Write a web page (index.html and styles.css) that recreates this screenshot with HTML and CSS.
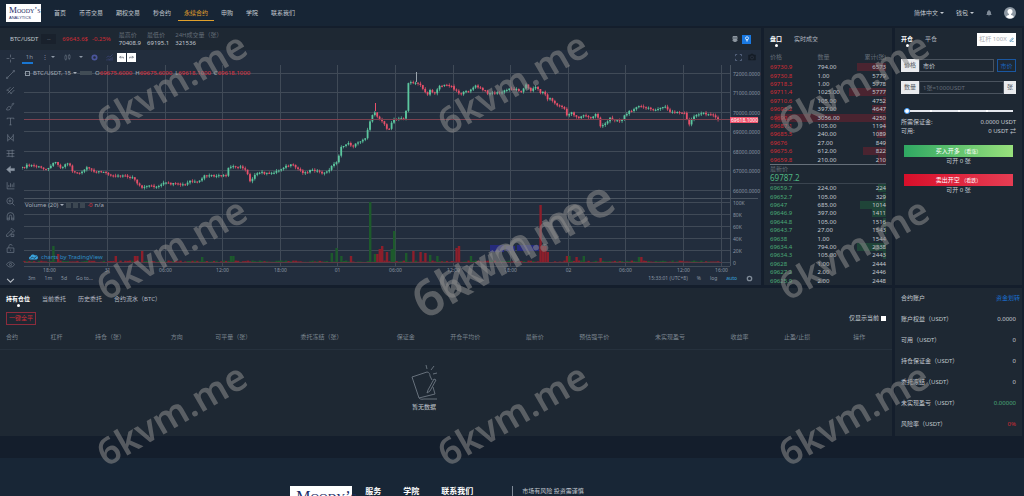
FILE: index.html
```html
<!DOCTYPE html>
<html lang="zh-CN">
<head>
  <meta charset="UTF-8">
  <meta name="viewport" content="width=device-width, initial-scale=1.0">
  <title>永续合约</title>
  <link rel="stylesheet" href="styles.css">
</head>
<body>
  <header class="header">
    <a class="logo" href="#"><span class="logo-name">M<small>OODY</small>’<small>S</small></span><span class="logo-sub">ANALYTICS</span></a>
    <nav class="nav">
      <a href="#">首页</a>
      <a href="#">币币交易</a>
      <a href="#">期权交易</a>
      <a href="#">秒合约</a>
      <a href="#" class="active">永续合约</a>
      <a href="#">申购</a>
      <a href="#">学院</a>
      <a href="#">联系我们</a>
    </nav>
    <div class="user-menu">
      <a href="#">简体中文<i class="caret"></i></a>
      <a href="#">钱包<i class="caret"></i></a>
      <svg class="bell" viewBox="0 0 12 14"><path d="M6 1c1 0 1.400 .6 1.400 1.300C9.500 3 10 5 10 7c0 2 .6 2.800 1.500 3.800H.5C1.400 9.800 2 9 2 7c0-2 .5-4 2.600-4.700C4.600 1.600 5 1 6 1zM4.500 12h3c0 2-3 2-3 0z"/></svg>
      <svg class="avatar" viewBox="0 0 24 24"><circle cx="12" cy="12" r="12" fill="#8d98a3"/><circle cx="12" cy="9" r="5" fill="#fff"/><path d="M10 12h4v4c3 .6 5.500 1.500 5.500 4.200A12 12 0 0 1 4.500 20.200C4.500 17.500 7 16.600 10 16z" fill="#fff"/></svg>
    </div>
  </header>

  <main class="main">
    <section class="panel market">
      <div class="ticker">
        <span class="pair">BTC/USDT</span>
        <button type="button" class="pair-select">--</button>
        <span class="last red">69643.6$</span>
        <span class="change red">-0.25%</span>
        <dl>
          <div><dt>最高价</dt><dd>70408.9</dd></div>
          <div><dt>最低价</dt><dd>69195.1</dd></div>
          <div><dt>24H成交量（张）</dt><dd>321536</dd></div>
        </dl>
        <div class="ticker-tools">
          <svg viewBox="0 0 12 12"><path d="M2 1h8v6H2zM2 4h8M6 1v8M1 9h10M3 11h6" fill="none" stroke="#aab2bb" stroke-width="1.500"/></svg>
          <button type="button" class="theme" aria-label="主题"><svg viewBox="0 0 12 12"><circle cx="6" cy="4.500" r="3" fill="none" stroke="#fff" stroke-width="1.500"/><path d="M6 7v4" stroke="#fff" stroke-width="2"/></svg></button>
        </div>
      </div>
      <div class="chart">
        <div class="draw-tools">
          <svg viewBox="0 0 16 16"><path d="M8 1v5M8 10v5M1 8h5M10 8h5"/></svg>
          <svg viewBox="0 0 16 16"><path d="M3 13L13 3"/><circle cx="2" cy="14" r="1.500"/><circle cx="14" cy="2" r="1.500"/></svg>
          <svg viewBox="0 0 16 16"><path d="M1 9l7-7M3 13L14 2M8 14l7-7M2 6l8 8"/></svg>
          <svg viewBox="0 0 16 16"><path d="M1 14c1-5 4-7 7-5 2 3-2 6-7 5zM8 9l6-6M10 4l4-2"/></svg>
          <svg viewBox="0 0 16 16"><path d="M2 4V2h12v2M8 2v12M6 14h4"/></svg>
          <svg viewBox="0 0 16 16"><path d="M3 13V4l5 6 5-6v9M3 13l5-3 5 3M2 3h2M12 3h2M2 14h2M12 14h2"/></svg>
          <svg viewBox="0 0 16 16"><path d="M1 3h14M1 8h14M1 13h14M5 3v10M11 1v14"/></svg>
          <svg viewBox="0 0 16 16" class="solid"><path d="M1 8l7-6v4h7v4H8v4z"/></svg>
          <svg viewBox="0 0 16 16"><path d="M2 2v12h13M5 11V7M8 11V4M11 11V6M14 11V3"/></svg>
          <svg viewBox="0 0 16 16"><circle cx="7" cy="7" r="5.500"/><path d="M11 11l4 4M4.500 7h5M7 4.500v5"/></svg>
          <svg viewBox="0 0 16 16"><path d="M2 14V7a6 6 0 0 1 12 0v7h-4V7.500a2 2 0 0 0-4 0V14zM2 11h4M10 11h4"/></svg>
          <svg viewBox="0 0 16 16"><path d="M1 12l8-8 3 3-8 8H1zM8 2l3-1 4 4-2 3M9 11h5v4H9z"/></svg>
          <svg viewBox="0 0 16 16"><path d="M2 7h12v8H2zM5 7V4c0-4 6-4 6-1M8 10v2"/></svg>
          <svg viewBox="0 0 16 16"><path d="M1 8c3-6 11-6 14 0-3 6-11 6-14 0z"/><circle cx="8" cy="8" r="2"/></svg>
          <svg viewBox="0 0 16 16" class="bright"><path d="M2 5l6 6 6-6"/></svg>
        </div>
        <div class="chart-body">
          <div class="chart-toolbar">
            <span class="interval">1h</span>
            <span class="dots">⋮</span><i class="caret"></i>
            <svg class="kline" viewBox="0 0 16 16"><path d="M2 4h4v8H2zM4 1v3M4 12v3M10 3h4v7h-4zM12 0v3M12 10v4"/></svg><i class="caret"></i>
            <svg class="gear" viewBox="0 0 16 16"><circle cx="8" cy="8" r="5" stroke-width="4"/></svg>
            <svg class="indicator" viewBox="0 0 16 16"><path d="M1 8l4-3 4 2 6-6M2 15v-3M5 15v-5M8 15v-4M11 15V9M14 15V7"/></svg>
            <div class="history">
              <button type="button" aria-label="撤销"><svg viewBox="0 0 16 16"><path d="M6 3L2 7l4 4M2 7h12v4"/></svg></button>
              <button type="button" aria-label="重做"><svg viewBox="0 0 16 16"><path d="M10 3l4 4-4 4M14 7H2v4"/></svg></button>
            </div>
            <svg class="fullscreen" viewBox="0 0 16 16"><path d="M1 5V1h4M11 1h4v4M15 11v4h-4M5 15H1v-4"/></svg>
            <svg class="camera" viewBox="0 0 16 16"><path d="M1 4h4l1-2h4l1 2h4v10H1z"/><circle cx="8" cy="9" r="3"/></svg>
          </div>
          <div class="plot">
            <svg id="kline" viewBox="22 64 739 210"></svg>
            <div class="legend">
              <i class="box"></i><span class="symbol">BTC/USDT, 15</span><i class="caret"></i><i class="chip"></i>
              <span>O<b>69675.6000</b></span><span>H<b>69675.6000</b></span><span>L<b>69618.1000</b></span><span>C<b>69618.1000</b></span>
            </div>
            <div class="legend volume">
              <span>Volume (20)</span><i class="caret"></i><i class="square"></i><i class="square"></i><i class="square"></i><b>·0</b><span>n/a</span>
            </div>
            <a class="tv" href="#"><svg viewBox="0 0 18 12"><path d="M3 11a3 3 0 0 1 0-6 5 5 0 0 1 9-2 4 4 0 0 1 3 8z" fill="#3aa5df"/><path d="M3 9l4-3 3 3 5-4" stroke="#222d3d" stroke-width="1.500" fill="none"/></svg>charts by TradingView</a>
          </div>
          <div class="chart-footer">
            <button type="button">3m</button>
            <button type="button">1m</button>
            <button type="button">5d</button>
            <button type="button">Go to...</button>
            <span class="clock">15:33:01 (UTC+8)</span>
            <button type="button">%</button>
            <button type="button">log</button>
            <button type="button" class="auto">auto</button>
            <svg viewBox="0 0 16 16"><circle cx="8" cy="8" r="5"/></svg>
          </div>
        </div>
      </div>
    </section>

    <section class="panel book">
      <div class="tabs">
        <a href="#" class="active">盘口</a>
        <a href="#">实时成交</a>
      </div>
      <table class="depth">
        <thead><tr><th>价格</th><th>数量</th><th>累计(张)</th></tr></thead>
      </table>
      <table class="depth rows asks"><tbody id="asks"></tbody></table>
      <div class="latest"><span>最新价</span><strong>69787.2</strong></div>
      <table class="depth rows bids"><tbody id="bids"></tbody></table>
    </section>

    <section class="panel trade">
      <div class="tabs">
        <a href="#" class="active">开仓</a>
        <a href="#">平仓</a>
        <button type="button" class="lever">杠杆 100X <svg viewBox="0 0 16 16"><path d="M3 12l8-9 3 2-8 9H3zM8 15h7"/></svg></button>
      </div>
      <form class="trade-form">
        <div class="field">
          <label for="price">价格</label>
          <input type="text" id="price" value="市价">
          <button type="button" class="market-btn">市价</button>
        </div>
        <div class="field">
          <label for="amount">数量</label>
          <input type="text" id="amount" placeholder="1张=1000USDT">
          <span class="unit">张</span>
        </div>
        <input type="range" class="slider" aria-label="仓位比例" min="0" max="100" value="0">
        <div class="info"><span>所需保证金:</span><span>0.0000 USDT</span></div>
        <div class="info"><span>可用:</span><span>0 USDT ⇄</span></div>
        <button type="button" class="buy">买入开多 <small>（看涨）</small></button>
        <p>可开 0 张</p>
        <button type="button" class="sell">卖出开空 <small>（看跌）</small></button>
        <p>可开 0 张</p>
      </form>
    </section>

    <section class="panel positions">
      <div class="tabs">
        <a href="#" class="active">持有仓位</a>
        <a href="#">当前委托</a>
        <a href="#">历史委托</a>
        <a href="#">合约流水（BTC）</a>
      </div>
      <div class="actions">
        <button type="button" class="close-all">一键全平</button>
        <label for="only-current">仅显示当前 <input type="checkbox" id="only-current"></label>
      </div>
      <table class="position-table">
        <thead>
          <tr>
            <th>合约</th><th>杠杆</th><th>持仓（张）</th><th>方向</th><th>可平量（张）</th><th>委托冻结（张）</th><th>保证金</th>
            <th>开仓平均价</th><th>最新价</th><th>预估强平价</th><th>未实现盈亏</th><th>收益率</th><th>止盈/止损</th><th>操作</th>
          </tr>
        </thead>
      </table>
      <div class="empty">
        <svg viewBox="0 0 28 36"><path d="M2 12l15-5c2 0 3 2 3 4l2 4M2 12l7 21 16-4-2-7M9 33c2 2 4 1 5 1h13"/><path d="M18 25l6-11 2 1-6 11-3 2z"/><path d="M17 4l-1-4M21 5l3-4M23 9l4-1"/></svg>
        <span>暂无数据</span>
      </div>
    </section>

    <section class="panel account">
      <h2>合约账户 <a href="#">资金划转</a></h2>
      <dl>
        <div><dt>账户权益（USDT）</dt><dd>0.0000</dd></div>
        <div><dt>可用（USDT）</dt><dd>0</dd></div>
        <div><dt>持仓保证金（USDT）</dt><dd>0</dd></div>
        <div><dt>委托冻结（USDT）</dt><dd>0</dd></div>
        <div><dt>未实现盈亏（USDT）</dt><dd class="green">0.00000</dd></div>
        <div><dt>风险率（USDT）</dt><dd class="red">0%</dd></div>
      </dl>
    </section>
  </main>

  <footer class="footer">
    <a class="logo logo-big" href="#"><span class="logo-name">M<small>OODY</small>’<small>S</small></span><span class="logo-sub">ANALYTICS</span></a>
    <h3>服务</h3>
    <h3>学院</h3>
    <h3>联系我们</h3>
    <p>市场有风险 投资需谨慎</p>
  </footer>

  <div class="watermark">
    <span>6kvm.me</span><span>6kvm.me</span><span>6kvm.me</span>
    <span>6kvm.me</span><span>6kvm.me</span><span>6kvm.me</span>
    <span>6kvm.me</span><span>6kvm.me</span><span>6kvm.me</span>
  </div>
  <div class="watermark watermark-big"><span>6kvm.me</span></div>

  <script src="script.js"></script>
</body>
</html>
```
FILE: styles.css
```css
* {
  box-sizing: border-box;
}
body {
  margin: 0;
  height: 100vh;
  overflow: hidden;
  background-color: #141e2c;
  color: #c3c9d0;
  font-family: "Noto Sans", "Noto Sans CJK SC", sans-serif;
  font-size: 6px;
  line-height: 8px;
}
a {
  color: inherit;
  text-decoration: none;
}
button, input {
  font: inherit;
  color: inherit;
  margin: 0;
  padding: 0;
  border: none;
  background: none;
}
button {
  cursor: pointer;
}
dl, dd, p, h2, h3 {
  margin: 0;
}
svg {
  display: block;
  fill: none;
  stroke: #7f8a97;
}
.red {
  color: #d22c35;
}
.green {
  color: #4aa877;
}
.caret {
  display: inline-block;
  border: 2px solid transparent;
  border-top-color: currentColor;
  border-bottom: none;
  vertical-align: middle;
}

/* header */
.header {
  display: flex;
  align-items: center;
  height: 26px;
  padding: 0 8px 0 6px;
  background-color: #172535;
}
.logo {
  display: flex;
  flex-direction: column;
  justify-content: center;
  width: 35px;
  height: 18px;
  padding-left: 3px;
  background-color: #fff;
  color: #1c2c66;
}
.logo-name {
  font: 9px/8px "Liberation Serif", serif;
  white-space: nowrap;
}
.logo-name small {
  font-size: 6px;
}
.logo-sub {
  font: 4px/5px "Liberation Sans", sans-serif;
}
.nav {
  display: flex;
  gap: 1px;
  margin-left: 7px;
}
.nav a {
  padding: 4px 6px 3px;
  border-bottom: 1px solid transparent;
}
.nav .active {
  color: #e0a02c;
  border-color: #e0a02c;
}
.user-menu {
  display: flex;
  align-items: center;
  gap: 12px;
  margin-left: auto;
}
.user-menu .caret {
  margin-left: 2px;
}
.bell {
  width: 6px;
  height: 8px;
  fill: #7f8a97;
  stroke: none;
}
.avatar {
  width: 12px;
  height: 12px;
  stroke: none;
}

/* layout */
.main {
  display: grid;
  grid-template-columns: minmax(0, 1fr) 128px 127px;
  gap: 3px;
  padding: 2px 2px 0 0;
}
.panel {
  background-color: #1e2833;
}
.positions {
  grid-column: 1 / 3;
}
.tabs {
  display: flex;
  align-items: center;
  gap: 12px;
  height: 22px;
  color: #b4bac2;
}
.tabs .active {
  position: relative;
  color: #fff;
  font-weight: bold;
}
.tabs .active::after {
  content: "";
  position: absolute;
  left: 50%;
  top: 9px;
  width: 3px;
  height: 3px;
  margin-left: -1px;
  border-radius: 50%;
  background-color: #fff;
}

/* ticker */
.ticker {
  display: flex;
  align-items: center;
  height: 22px;
  padding: 0 10px;
}
.pair-select {
  width: 15px;
  height: 10px;
  margin: 0 6px 0 3px;
  background-color: #19212c;
  color: #687280;
}
.change {
  margin-left: 4px;
}
.ticker dl {
  display: flex;
  gap: 6px;
  margin-left: 8px;
}
.ticker dt {
  color: #646d78;
}
.ticker-tools {
  display: flex;
  align-items: center;
  gap: 4px;
  margin-left: auto;
}
.ticker-tools svg {
  width: 6px;
  height: 6px;
}
.theme {
  display: grid;
  place-items: center;
  width: 9px;
  height: 9px;
  background-color: #1978e0;
}

/* chart */
.chart {
  display: grid;
  grid-template-columns: 22px minmax(0, 1fr);
  background-color: #222d3d;
  color: #8b96a3;
}
.draw-tools {
  display: flex;
  flex-direction: column;
  align-items: center;
  justify-content: space-between;
  padding: 4px 1px 0 0;
}
.draw-tools svg {
  width: 9px;
  height: 9px;
}
.draw-tools .solid {
  fill: #8b96a3;
}
.draw-tools .bright {
  stroke: #b4bac2;
  stroke-width: 2;
}
.chart-toolbar {
  display: flex;
  align-items: center;
  height: 14px;
  padding-right: 5px;
}
.chart-toolbar svg {
  width: 7px;
  height: 7px;
}
.interval {
  width: 11px;
  height: 14px;
  padding-top: 3px;
  border-bottom: 2px solid #1976d2;
  text-align: right;
}
.dots {
  margin: 0 3px 0 9px;
}
.chart-toolbar .kline {
  margin: 0 8px 0 9px;
}
.chart-toolbar .gear {
  margin: 0 8px 0 8px;
  stroke: #4b559c;
}
.chart-toolbar .indicator {
  stroke: #4b559c;
}
.history {
  display: flex;
  gap: 1px;
  margin-left: 4px;
}
.history button {
  display: grid;
  place-items: center;
  width: 9px;
  height: 9px;
  background-color: #fff;
}
.history svg {
  width: 5px;
  height: 5px;
  stroke: #4b5563;
  stroke-width: 2;
}
.chart-toolbar .fullscreen {
  margin: 0 6px 0 auto;
  stroke: #5d6a86;
  stroke-width: 2;
}
.chart-toolbar .camera {
  width: 8px;
  height: 8px;
  fill: #151c27;
  stroke: #151c27;
}
.camera circle {
  stroke: #39424f;
}
.plot {
  position: relative;
}
.plot > svg {
  width: 100%;
  stroke: none;
}
.axis-text {
  font-size: 5px;
  fill: #8b96a3;
}
.tag-text {
  font-size: 5px;
  fill: #fff;
}
.legend {
  position: absolute;
  top: 5px;
  left: 3px;
  display: flex;
  align-items: center;
  gap: 3px;
  color: #a5aeb9;
}
.legend b {
  font-weight: normal;
  color: #e0323f;
}
.legend .caret {
  margin-left: -1px;
}
.box {
  width: 5px;
  height: 5px;
  border: 1px solid #8b96a3;
}
.chip {
  width: 12px;
  height: 4px;
  background-color: #414c55;
}
.legend.volume {
  top: 137px;
  gap: 2px;
}
.volume .caret {
  margin-left: 0;
}
.volume .square {
  width: 5px;
  height: 6px;
  background-color: #3c4752;
}
.tv {
  position: absolute;
  left: 7px;
  top: 189px;
  display: flex;
  align-items: center;
  gap: 3px;
  color: #2f8fc4;
}
.tv svg {
  width: 9px;
  height: 6px;
  stroke: none;
}
.chart-footer {
  display: flex;
  align-items: center;
  gap: 9px;
  height: 11px;
  padding: 0 8px 3px 6px;
  font-size: 5px;
}
.clock {
  margin-left: auto;
}
.auto {
  color: #3aa5df;
}
.chart-footer svg {
  width: 7px;
  height: 7px;
  stroke-width: 3;
}

/* order book */
.book {
  padding: 0 6px;
}
.depth {
  width: 100%;
  table-layout: fixed;
  border-collapse: collapse;
}
.depth th, .depth td {
  padding: 0;
  text-align: left;
  font-weight: normal;
  line-height: 8px;
  width: 41%;
}
.depth th {
  height: 13px;
  color: #646d78;
}
.depth th:last-child, .depth td:last-child {
  width: auto;
  text-align: right;
}
.depth th:nth-child(2), .depth td:nth-child(2) {
  width: 28%;
}
.rows {
  height: 101px;
}
.rows tr {
  background: linear-gradient(var(--bar), var(--bar)) right / var(--depth) 100% no-repeat;
}
.asks {
  --bar: #4a2430;
}
.bids {
  --bar: #1f4438;
}
.asks td:first-child {
  color: #d22c35;
}
.bids td:first-child {
  color: #4aa877;
}
.latest {
  display: flex;
  flex-direction: column;
  height: 20px;
  border-top: 1px solid #67707a;
  border-bottom: 1px solid #3a444f;
  color: #646d78;
}
.latest strong {
  color: #4fb582;
  font-size: 8px;
  font-weight: normal;
  line-height: 9px;
}

/* trade form */
.trade {
  padding: 0 6px;
}
.lever {
  display: flex;
  align-items: center;
  justify-content: center;
  gap: 2px;
  width: 39px;
  height: 13px;
  margin-left: auto;
  background-color: #fff;
  color: #a6a9b0;
}
.lever svg {
  width: 5px;
  height: 5px;
  stroke: #2879a8;
  stroke-width: 2;
}
.trade-form {
  display: flex;
  flex-direction: column;
  padding-top: 9px;
}
.field {
  display: flex;
  height: 13px;
  margin-bottom: 9px;
}
.field label, .unit {
  width: 18px;
  background-color: #e9ebee;
  color: #505862;
  text-align: center;
  line-height: 13px;
}
.unit {
  width: 12px;
}
.field input {
  flex: 1;
  min-width: 0;
  padding: 0 3px;
  border: 1px solid #4a535e;
}
.field input::placeholder {
  color: #646d78;
}
.market-btn {
  width: 19px;
  margin-left: 3px;
  border: 1px solid #1a57a0;
  color: #1a64c0;
}
.slider {
  appearance: none;
  height: 6px;
  margin: 5px 3px 4px 3px;
}
.slider::-webkit-slider-runnable-track {
  height: 2px;
  background: repeating-linear-gradient(90deg, #e4e7ed 0 26px, #fff 26px 28px);
}
.slider::-webkit-slider-thumb {
  appearance: none;
  width: 6px;
  height: 6px;
  margin-top: -2px;
  border: 1px solid #409eff;
  border-radius: 50%;
  background-color: #fff;
}
.info {
  display: flex;
  justify-content: space-between;
  line-height: 9px;
}
.buy, .sell {
  height: 12px;
  margin: 9px 3px 0;
  color: #fff;
}
.buy {
  background: linear-gradient(90deg, #2fa862, #98e07c);
}
.sell {
  background: linear-gradient(90deg, #d80f2a, #e63d53);
}
.buy small, .sell small {
  font-size: 5px;
}
.trade-form p {
  text-align: center;
}

/* positions */
.positions .tabs, .actions {
  padding: 0 6px;
}
.actions {
  display: flex;
  align-items: center;
  justify-content: space-between;
  height: 16px;
}
.close-all {
  width: 30px;
  height: 13px;
  border: 1px solid #8c2c3c;
  color: #d22c35;
}
.actions label {
  display: flex;
  align-items: center;
  gap: 2px;
}
.actions input {
  appearance: none;
  width: 5px;
  height: 5px;
  background-color: #fff;
}
.actions input:checked {
  background-color: #1978e0;
}
.position-table {
  width: 100%;
  table-layout: fixed;
  border-collapse: collapse;
  border-bottom: 1px solid #26313d;
}
.position-table th {
  width: 5%;
  height: 23px;
  padding: 0 0 0 6px;
  color: #7b858f;
  font-weight: normal;
  text-align: left;
}
.position-table th:nth-child(3), .position-table th:nth-child(8),
.position-table th:nth-child(10), .position-table th:nth-child(11) {
  width: 8.5%;
}
.position-table th:nth-child(5) {
  width: 9.6%;
}
.position-table th:nth-child(6) {
  width: 10.8%;
}
.position-table th:nth-child(7), .position-table th:nth-child(9),
.position-table th:nth-child(12) {
  width: 6%;
}
.position-table th:nth-child(13) {
  width: 7.8%;
}
.empty {
  display: flex;
  flex-direction: column;
  align-items: center;
  gap: 2px;
  padding: 15px 44px 25px 0;
}
.empty svg {
  width: 28px;
  height: 36px;
  stroke: #66707b;
}

/* account */
.account {
  padding: 0 6px;
}
.account h2 {
  display: flex;
  justify-content: space-between;
  margin-right: -4px;
  font-size: 6px;
  font-weight: normal;
  line-height: 21px;
}
.account h2 a {
  color: #1a6fd0;
}
.account dl div {
  display: flex;
  justify-content: space-between;
  line-height: 21px;
}

/* footer */
.footer {
  display: flex;
  justify-content: center;
  height: 90px;
  margin-top: 22px;
  padding: 28px 150px 0 0;
  background-color: #182636;
}
.logo-big {
  width: 62px;
  height: 32px;
  padding-left: 6px;
  margin-right: 13px;
}
.logo-big .logo-name {
  font-size: 16px;
  line-height: 16px;
}
.logo-big .logo-name small {
  font-size: 12px;
}
.logo-big .logo-sub {
  font-size: 8px;
  line-height: 9px;
}
.footer h3 {
  margin-right: 22px;
  color: #fff;
  font-size: 8px;
  line-height: 10px;
}
.footer p {
  margin-left: 17px;
  padding-left: 9px;
  border-left: 1px solid #7f8a97;
  line-height: 10px;
}

/* watermark */
.watermark {
  position: fixed;
  inset: 0;
  display: grid;
  grid-template-columns: repeat(3, 1fr);
  grid-auto-rows: 1fr;
  place-items: center;
  pointer-events: none;
  color: rgba(140, 140, 140, 0.55);
  font-family: "Noto Sans", sans-serif;
  font-size: 37px;
  font-weight: 600;
  line-height: 1;
}
.watermark span {
  transform: rotate(-30deg);
}
.watermark-big {
  grid-template-columns: 1fr;
  font-size: 50px;
}
```
FILE: script.js
```js
const NS = 'http://www.w3.org/2000/svg';
const chart = document.getElementById('kline');

function draw(tag, attrs, text) {
  const el = document.createElementNS(NS, tag);
  for (const key in attrs) el.setAttribute(key, attrs[key]);
  if (text) el.textContent = text;
  chart.appendChild(el);
}

function line(x1, y1, x2, y2, color) {
  draw('path', { d: `M${x1} ${y1}L${x2} ${y2}`, stroke: color, 'stroke-width': 1 });
}

// grid and axes
const grid = '#404a57';
const prices = [73.5, 92.5, 112.5, 131.5, 151.5, 170.5, 190.5];
const volumes = [202.5, 214.5, 226.5, 238.5, 250.5, 262.5];
const times = [[49.5, '18:00'], [107.5, '31'], [165.5, '06:00'], [222.5, '12:00'], [280.5, '18:00'], [337.5, '01'],
  [395.5, '06:00'], [453.5, '12:00'], [510.5, '18:00'], [568.5, '02'], [625.5, '06:00'], [683.5, '12:00'], [721.5, '16:00']];

prices.forEach((y, i) => {
  line(24, y, 730, y, grid);
  draw('text', { x: 733, y: y + 2, class: 'axis-text' }, `${72 - i}000.0000`);
});
volumes.forEach((y, i) => {
  line(24, y, 730, y, grid);
  draw('text', { x: 733, y: y + 2, class: 'axis-text' }, i === 5 ? '0' : `${100 - i * 20}K`);
});
times.forEach(([x, label]) => {
  line(x, 65, x, 266, grid);
  draw('text', { x, y: 272, class: 'axis-text', 'text-anchor': 'middle' }, label);
});
line(24, 198.5, 758, 198.5, '#4a5460');
line(24, 266.5, 730, 266.5, grid);
line(730.5, 65, 730.5, 266, '#4a5460');

// closing price path, x then y
const path = [[22, 168], [28, 165], [36, 166], [44, 169], [52, 166], [54, 159], [58, 165], [62, 168], [66, 163], [70, 165], [72, 171],
  [80, 174], [86, 168], [95, 171], [107, 173], [114, 176], [120, 175], [134, 178], [137, 184], [143, 189], [147, 185], [158, 187],
  [164, 183], [172, 184], [185, 185], [190, 181], [198, 183], [204, 176], [215, 176], [226, 176], [228, 168], [234, 166], [240, 167],
  [247, 170], [249, 182], [254, 176], [261, 172], [268, 174], [280, 170], [283, 167], [292, 165], [304, 173], [313, 169], [320, 173],
  [326, 173], [330, 168], [337, 161], [341, 148], [347, 143], [353, 146], [366, 137], [370, 121], [374, 110], [378, 118], [383, 121],
  [386, 130], [390, 128], [393, 118], [404, 119], [406, 110], [407, 83], [413, 83], [420, 84], [427, 95], [430, 91], [436, 93],
  [438, 86], [450, 85], [460, 94], [466, 92], [476, 86], [488, 93], [500, 93], [511, 88], [522, 91], [526, 85], [530, 91], [535, 86],
  [540, 92], [545, 93], [547, 100], [550, 98], [555, 104], [560, 106], [564, 108], [566, 116], [571, 112], [578, 118], [585, 115],
  [590, 119], [597, 113], [600, 126], [606, 124], [610, 118], [620, 121], [625, 115], [637, 106], [650, 109], [660, 109], [666, 106],
  [669, 112], [685, 113], [689, 125], [693, 117], [703, 113], [712, 115], [719, 120]];
const spikes = { 54: 16, 57: 8, 116: 6, 136: 6, 142: 11, 202: 5, 232: 6, 331: 9, 337: 14, 342: 6, 350: 6, 369: 14, 371: 60, 376: 8, 380: 13,
  383: 16, 386: 10, 391: 13, 393: 31, 407: 9, 414: 11, 421: 10, 426: 9, 431: 7, 438: 6, 457: 14, 459: 16, 470: 6, 541: 57, 544: 16,
  548: 10, 568: 6, 577: 5, 583: 6, 600: 4, 640: 5 };

function priceAt(x) {
  let i = 1;
  while (i < path.length - 1 && path[i][0] < x) i++;
  const [x0, y0] = path[i - 1];
  const [x1, y1] = path[i];
  return y0 + (y1 - y0) * (x - x0) / (x1 - x0);
}

function noise(i) {
  const n = Math.sin(i * 12.9898) * 43758.5453;
  return n - Math.floor(n);
}

let open = 168;
for (let i = 0; i < 291; i++) {
  const x = 22 + i * 2.4;
  const close = priceAt(x) + (noise(i) - 0.5) * 2;
  const up = close < open;
  const color = up ? '#5cc79f' : '#e8506a';
  const top = Math.min(open, close);
  const bottom = Math.max(open, close);
  const volume = Object.keys(spikes).reduce((h, k) => Math.abs(k - x) < 1.3 ? Math.max(h, spikes[k]) : h, noise(i + 400) * 1.5);
  const barUp = x > 535 && x < 550 ? false : volume > 25 ? true : up;
  draw('rect', { x: x - 1, y: 262 - volume, width: 2.4, height: volume, fill: barUp ? '#1d5a2c' : '#8c1f2b' });
  draw('rect', { x: x - 0.3, y: top - noise(i + 50) * 2, width: 0.7, height: bottom - top + 1 + noise(i + 50) * 2 + noise(i + 90), fill: color });
  draw('rect', { x: x - 0.9, y: top, width: 1.8, height: Math.max(1, bottom - top), fill: color });
  open = close;
}
draw('rect', { x: 416, y: 72, width: 1, height: 10, fill: '#9aa4ad' });
draw('rect', { x: 375, y: 103, width: 1, height: 8, fill: '#e8506a' });
draw('path', { d: 'M490 245h14v7h-14zM506 246h9v5h-9zM517 245h22v6h-22z', fill: '#252a7c' });
line(24, 262.5, 722, 262.5, '#5c3a45');

// current price
line(24, 119.5, 730, 119.5, '#7c4250');
draw('rect', { x: 730, y: 117, width: 28, height: 6, fill: '#f0506a' });
draw('text', { x: 731, y: 122, class: 'tag-text' }, '69618.1000');

// order book: price, amount, total, bar width in percent
const asks = [['69730.9', '794.00', 6573, 25], ['69730.8', '1.00', 5779, 0], ['69718.3', '1.00', 5778, 0], ['69711.4', '1025.00', 5777, 32],
  ['69710.6', '105.00', 4752, 3], ['69695.2', '397.00', 4647, 12], ['69690.1', '3056.00', 4250, 96], ['69687.1', '105.00', 1194, 3],
  ['69685.5', '240.00', 1089, 8], ['69676', '27.00', 849, 1], ['69675.6', '612.00', 822, 20], ['69659.8', '210.00', 210, 7]];
const bids = [['69659.7', '224.00', 224, 7], ['69652.7', '105.00', 329, 3], ['69647', '685.00', 1014, 22], ['69646.9', '397.00', 1411, 12],
  ['69644.8', '105.00', 1516, 3], ['69643.7', '27.00', 1543, 1], ['69638', '1.00', 1544, 0], ['69634.4', '794.00', 2338, 25],
  ['69634.3', '105.00', 2443, 3], ['69628', '1.00', 2444, 0], ['69627.2', '2.00', 2446, 0], ['69625.9', '2.00', 2448, 0]];

function renderBook(id, rows) {
  document.getElementById(id).innerHTML = rows.map(([price, amount, total, depth]) =>
    `<tr style="--depth: ${depth}%"><td>${price}</td><td>${amount}</td><td>${total}</td></tr>`).join('');
}
renderBook('asks', asks);
renderBook('bids', bids);
```
